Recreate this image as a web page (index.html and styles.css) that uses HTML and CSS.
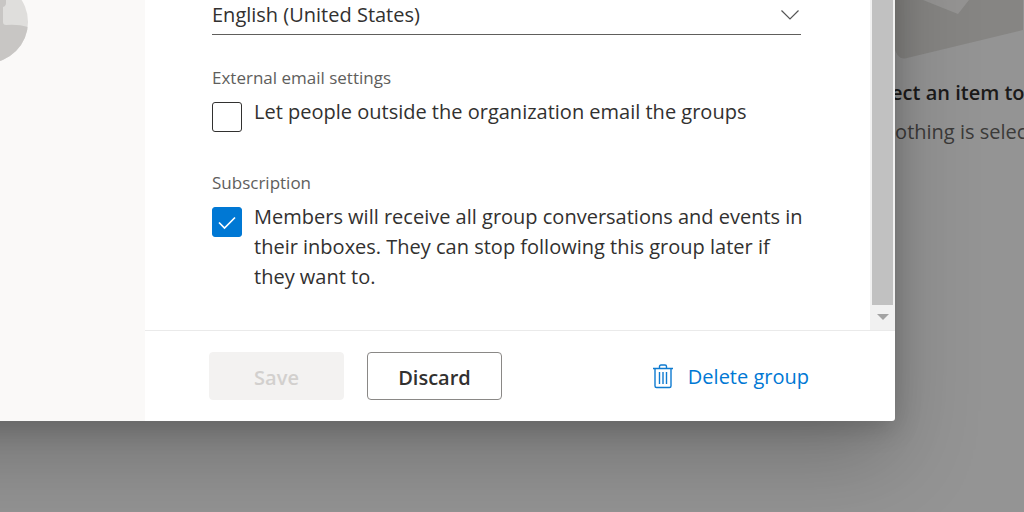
FILE: index.html
```html
<!DOCTYPE html>
<html lang="en">
<head>
<meta charset="utf-8">
<title>Group settings</title>
<link rel="stylesheet" href="styles.css">
</head>
<body>
<main class="page">
  <section class="details">
    <svg class="details-art" width="160" height="64" viewBox="0 0 160 64" aria-hidden="true">
      <path d="M31 0V46Q34 61 44 58L160 30V0Z" fill="#868583"/>
      <path d="M60 0L95 14L106 0Z" fill="#959493"/>
    </svg>
    <div class="details-text">
      <h2 class="details-title">Select an item to read</h2>
      <p class="details-note">Nothing is selected</p>
    </div>
  </section>
</main>
<div class="overlay">
  <div class="dialog" role="dialog" aria-label="Edit group">
    <aside class="rail">
      <svg class="avatar" width="28" height="64" viewBox="0 0 28 64" aria-hidden="true">
        <clipPath id="disc"><circle cx="-13" cy="22" r="41"/></clipPath>
        <g clip-path="url(#disc)">
          <rect width="28" height="64" fill="#dfdedc"/>
          <path d="M0 0H6V3Q6 6 3 7V22Q3 25 6 25Q18 24 28 27V64H0Z" fill="#c8c6c4"/>
        </g>
      </svg>
    </aside>
    <form class="panel">
      <div class="scroller">
        <div class="fields">
          <div class="select-wrap">
            <select class="language" aria-label="Language"><option>English (United States)</option></select>
            <svg class="chevron" width="20" height="12" viewBox="0 0 20 12" aria-hidden="true"><path d="M1.500 1.500L10 10L18.500 1.500" fill="none" stroke="#555" stroke-width="1.2"/></svg>
          </div>
          <fieldset class="group">
            <legend class="legend">External email settings</legend>
            <div class="option">
              <input class="check" type="checkbox" id="external">
              <label for="external">Let people outside the organization email the groups</label>
            </div>
          </fieldset>
          <fieldset class="group">
            <legend class="legend">Subscription</legend>
            <div class="option">
              <span class="check-wrap">
                <input class="check" type="checkbox" id="subscribe" checked>
                <svg class="tick" width="30" height="30" viewBox="0 0 30 30" aria-hidden="true"><path d="M7 15.500L12.500 21L23 10.500" fill="none" stroke="#fff" stroke-width="1.7"/></svg>
              </span>
              <label for="subscribe">Members will receive all group conversations and events in their inboxes. They can stop following this group later if they want to.</label>
            </div>
          </fieldset>
        </div>
        <div class="scrollbar" aria-hidden="true">
          <div class="thumb"></div>
          <svg class="arrow" width="12" height="6" viewBox="0 0 12 6"><path d="M0 0H12L6 6Z" fill="#a3a3a3"/></svg>
        </div>
      </div>
      <footer class="footer">
        <button class="button" type="submit" disabled>Save</button>
        <button class="button" type="button">Discard</button>
        <button class="delete" type="button">
          <svg width="20" height="26" viewBox="0 0 20 26" fill="none" stroke="#0f7bd0" stroke-width="1.4" aria-hidden="true">
            <path d="M0 4.500H20M6.500 4.500V2.500Q6.500 1 8 1H12Q13.500 1 13.500 2.500V4.500M2 4.500V22Q2 23.500 3.500 23.500H16.500Q18 23.500 18 22V4.500M6.500 8V20M10 8V20M13.500 8V20"/>
          </svg>
          <span>Delete group</span>
        </button>
      </footer>
    </form>
  </div>
</div>
</body>
</html>
```
FILE: styles.css
```css
* { box-sizing: border-box; }

body {
  margin: 0;
  overflow: hidden;
  background: #949494;
  color: #323130;
  font: 20px/30px "Segoe UI", "Open Sans", sans-serif;
}

.page { display: flex; justify-content: flex-end; min-height: 100vh; overflow: hidden; }
.details { width: 161px; }
.details-art { display: block; }
.details-text { width: max-content; padding-top: 14px; text-align: center; }
.details-title { margin: 0; color: #1b1a19; font-size: 20px; font-weight: 600; line-height: 30px; }
.details-note { margin: 9px 0 0; color: #3b3a39; }

.overlay { position: absolute; inset: 0; padding-right: 129px; overflow: hidden; }

/* The dialog runs past the top and left edges of the window. */
.dialog {
  display: flex;
  margin: -120px 0 0 -120px;
  padding-top: 120px;
  background: #fff;
  border-radius: 0 0 3px;
  box-shadow: 0 38px 86px rgba(0, 0, 0, 0.22), 0 7px 27px rgba(0, 0, 0, 0.18);
}

.rail { flex: none; width: 265px; padding-left: 120px; background: #faf9f8; }
.avatar { display: block; }
.panel { flex: 1; min-width: 0; }

.scroller { display: flex; border-bottom: 1px solid #eaeaea; }
.fields { flex: 1; min-width: 0; padding: 0 60px 38px 67px; }

.select-wrap { display: grid; align-items: center; margin-right: 9px; border-bottom: 1px solid #605e5c; }
.language {
  grid-area: 1 / 1;
  appearance: none;
  width: 100%;
  height: 34px;
  padding: 0 0 4px;
  border: 0;
  background: none;
  color: inherit;
  font: inherit;
}
.chevron { grid-area: 1 / 1; justify-self: end; margin: 0 1px 4px 0; pointer-events: none; }

.group { min-width: 0; margin: 31px 0 0; padding: 0; border: 0; }
.group + .group { margin-top: 39px; }
.legend { padding: 0; color: #605e5c; font-size: 17px; line-height: 24px; }

.option { display: flex; align-items: flex-start; gap: 12px; margin-top: 7px; }
.check {
  appearance: none;
  flex: none;
  width: 30px;
  height: 30px;
  margin: 5px 0 0;
  border: 1px solid #323130;
  border-radius: 3px;
  background: #fff;
}
.check:checked { border-color: #0078d4; background: #0078d4; }
.check-wrap { display: grid; flex: none; }
.check-wrap .check { grid-area: 1 / 1; }
.tick { grid-area: 1 / 1; margin-top: 5px; pointer-events: none; }

.scrollbar { display: flex; flex-direction: column; width: 25px; padding: 0 2px; background: #f1f1f1; }
.thumb { flex: 1; background: #c1c1c1; }
.arrow { align-self: center; margin: 9px 0 10px; }

.footer { display: flex; align-items: center; gap: 23px; padding: 21px 86px 21px 64px; }
.button {
  width: 135px;
  height: 48px;
  padding: 3px 0 0;
  border: 1px solid #8a8886;
  border-radius: 4px;
  background: #fff;
  color: #323130;
  font: inherit;
  font-weight: 600;
}
.button:disabled { border-color: #f3f2f1; background: #f3f2f1; color: #d2d0ce; }
.delete {
  display: flex;
  align-items: center;
  gap: 15px;
  margin-left: auto;
  padding: 2px 0 0;
  border: 0;
  background: none;
  color: #0078d4;
  font: inherit;
}
```
